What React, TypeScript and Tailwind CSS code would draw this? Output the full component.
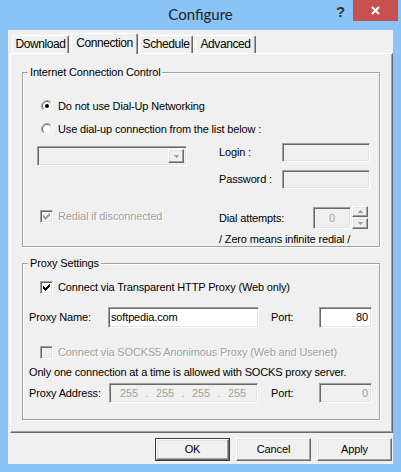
import type { ReactNode } from 'react'

const sunken =
  'border border-t-[#a0a0a0] border-l-[#a0a0a0] border-r-white border-b-white shadow-[inset_1px_1px_0_#696969,inset_-1px_-1px_0_#e3e3e3]'
const raised =
  'border border-t-white border-l-white border-r-[#696969] border-b-[#696969] shadow-[inset_-1px_-1px_0_#a0a0a0,inset_1px_1px_0_#e3e3e3]'
const grayText = 'text-[#a0a0a0] [text-shadow:1px_1px_0_#fff]'

function Radio({ checked }: { checked?: boolean }) {
  return (
    <svg width="12" height="12" viewBox="0 0 12 12" className="shrink-0">
      <circle cx="6" cy="6" r="5" fill="#fff" />
      <path d="M2.11 9.89 A5.5 5.5 0 0 1 9.89 2.11" fill="none" stroke="#a0a0a0" />
      <path d="M9.89 2.11 A5.5 5.5 0 0 1 2.11 9.89" fill="none" stroke="#fff" />
      <path d="M2.8 9.2 A4.5 4.5 0 0 1 9.2 2.8" fill="none" stroke="#696969" />
      <path d="M9.2 2.8 A4.5 4.5 0 0 1 2.8 9.2" fill="none" stroke="#e3e3e3" />
      {checked && <circle cx="6" cy="6" r="2" fill="#000" />}
    </svg>
  )
}

function Check({ checked, disabled }: { checked?: boolean; disabled?: boolean }) {
  const fill = disabled ? '#a0a0a0' : '#000'
  const tops = [2, 3, 4, 3, 2, 1, 0]
  return (
    <span
      className={`${sunken} w-[13px] h-[13px] shrink-0 flex items-center justify-center ${
        disabled ? 'bg-[#f0f0f0]' : 'bg-white'
      }`}
    >
      {checked && (
        <svg width="7" height="7" viewBox="0 0 7 7" shapeRendering="crispEdges">
          {tops.map((y, x) => (
            <rect key={x} x={x} y={y} width="1" height="3" fill={fill} />
          ))}
        </svg>
      )}
    </span>
  )
}

function Arrow({ up }: { up?: boolean }) {
  return (
    <svg width="5" height="3" viewBox="0 0 5 3" shapeRendering="crispEdges">
      <path d={up ? 'M2 0h1v1h1v1h1v1H0V2h1V1h1z' : 'M0 0h5v1H4v1H3v1H2V2H1V1H0z'} fill="#a0a0a0" />
    </svg>
  )
}

function Group({ title, children, className }: { title: string; children: ReactNode; className: string }) {
  return (
    <fieldset
      className={`${className} ml-[11px] w-[358px] border border-[#a0a0a0] shadow-[1px_1px_0_#fff,inset_1px_1px_0_#fff]`}
    >
      <legend className="ml-[5px] px-[2px] leading-[14px] bg-[#f0f0f0]">{title}</legend>
      {children}
    </fieldset>
  )
}

function Tab({ label, width, ml, active }: { label: string; width: string; ml: string; active?: boolean }) {
  return (
    <div
      className={`${width} ${ml} flex items-center justify-center rounded-t-[2px] border-t border-l border-r border-t-white border-l-white border-r-[#696969] shadow-[inset_-1px_0_0_#a0a0a0] text-[12px] tracking-[-0.4px] ${
        active ? 'h-[21px] -mb-[1px] relative z-10 bg-[#f0f0f0] pb-[2px]' : 'h-[18px]'
      }`}
    >
      {label}
    </div>
  )
}

function Button({ label, isDefault }: { label: string; isDefault?: boolean }) {
  return (
    <div className={`w-[75px] h-[23px] ${isDefault ? 'border border-[#3c3c3c]' : ''}`}>
      <div className={`${raised} h-full flex items-center justify-center`}>{label}</div>
    </div>
  )
}

function IpField() {
  const seg = 'w-[18px] text-center'
  const dot = 'w-[18px] text-center'
  return (
    <div className={`${sunken} w-[149px] h-[20px] bg-[#f0f0f0] flex items-center pl-[10px] text-[#a0a0a0]`}>
      <span className={seg}>255</span>
      <span className={dot}>.</span>
      <span className={seg}>255</span>
      <span className={dot}>.</span>
      <span className={seg}>255</span>
      <span className={dot}>.</span>
      <span className={seg}>255</span>
    </div>
  )
}

export default function App() {
  return (
    <div className="w-[401px] h-[472px] bg-[#8ac4f6] flex flex-col overflow-hidden font-['Liberation_Sans',Arial,sans-serif] text-[11px] leading-[13px] tracking-[-0.15px] text-black">
      {/* title bar */}
      <div className="h-[30px] flex shrink-0">
        <div className="flex-1" />
        <div className="pt-[5px] leading-[18px] text-[15px] tracking-normal text-[#1e1e1e] font-['Lato',sans-serif]">
          Configure
        </div>
        <div className="flex-1 flex justify-end items-start">
          <span className="mt-[4px] text-[15px] leading-[15px] font-bold text-[#333]">?</span>
          <div className="ml-[8px] mr-[3px] w-[45px] h-[21px] bg-[#c75050] flex items-center justify-center">
            <svg width="9" height="9" viewBox="0 0 9 9">
              <path d="M1 1L8 8M8 1L1 8" stroke="#fff" strokeWidth="2" />
            </svg>
          </div>
        </div>
      </div>

      {/* client area */}
      <div className="mx-[8px] mb-[8px] flex-1 bg-[#f0f0f0] flex flex-col">
        <div className="h-[23px] flex items-end shrink-0">
          <Tab label="Download" width="w-[57px]" ml="ml-[4px]" />
          <Tab label="Connection" width="w-[67px]" ml="ml-[2px]" active />
          <Tab label="Schedule" width="w-[54px]" ml="ml-[1px]" />
          <Tab label="Advanced" width="w-[61px]" ml="ml-[2px]" />
        </div>

        <div className="ml-[2px] w-[383px] h-[380px] shrink-0 border border-t-white border-l-white border-r-[#696969] border-b-[#696969] shadow-[inset_-1px_-1px_0_#a0a0a0]">
          <Group title="Internet Connection Control" className="mt-[11px]">
            <div className="mt-[19px] ml-[18px] h-[16px] flex items-center">
              <Radio checked />
              <span className="ml-[5px]">Do not use Dial-Up Networking</span>
            </div>
            <div className="mt-[7px] ml-[18px] h-[16px] flex items-center">
              <Radio />
              <span className="ml-[5px]">Use dial-up connection from the list below :</span>
            </div>
            <div className="mt-[6px] flex">
              <div className="ml-[14px] w-[150px]">
                <div className={`${sunken} mt-[3px] h-[20px] bg-[#f0f0f0] flex justify-end p-[2px]`}>
                  <div className={`${raised} w-[16px] h-full flex items-center justify-center`}>
                    <Arrow />
                  </div>
                </div>
                <div className="mt-[43px] ml-[3px] h-[14px] flex items-center">
                  <Check checked disabled />
                  <span className={`ml-[5px] ${grayText}`}>Redial if disconnected</span>
                </div>
              </div>
              <div className="ml-[32px]">
                <div className="h-[19px] flex items-center">
                  <span className="w-[63px]">Login :</span>
                  <div className={`${sunken} w-[88px] h-[19px] bg-[#f0f0f0]`} />
                </div>
                <div className="mt-[8px] h-[19px] flex items-center">
                  <span className="w-[63px]">Password :</span>
                  <div className={`${sunken} w-[88px] h-[19px] bg-[#f0f0f0]`} />
                </div>
                <div className="mt-[18px] h-[22px] flex items-center">
                  <span className="w-[94px]">Dial attempts:</span>
                  <div className={`${sunken} w-[38px] h-[22px] bg-[#f0f0f0] flex items-center justify-center text-[#a0a0a0]`}>
                    0
                  </div>
                  <div className="ml-[1px] w-[16px] h-[23px] -mt-[1px] flex flex-col gap-[1px]">
                    <div className={`${raised} h-[11px] flex items-center justify-center`}>
                      <Arrow up />
                    </div>
                    <div className={`${raised} h-[11px] flex items-center justify-center`}>
                      <Arrow />
                    </div>
                  </div>
                </div>
                <div className="mt-[4px] h-[13px]">/ Zero means infinite redial /</div>
              </div>
            </div>
          </Group>

          <Group title="Proxy Settings" className="mt-[9px]">
            <div className="mt-[9px] ml-[17px] h-[16px] flex items-center">
              <Check checked />
              <span className="ml-[5px]">Connect via Transparent HTTP Proxy (Web only)</span>
            </div>
            <div className="mt-[12px] pl-[6px] h-[21px] flex items-center">
              <span className="w-[79px]">Proxy Name:</span>
              <div className={`${sunken} w-[151px] h-[21px] bg-white flex items-center pl-[2px]`}>softpedia.com</div>
              <span className="ml-[12px] w-[48px]">Port:</span>
              <div className={`${sunken} w-[53px] h-[21px] bg-white flex items-center justify-end pr-[3px]`}>80</div>
            </div>
            <div className="mt-[16px] ml-[17px] h-[16px] flex items-center">
              <Check disabled />
              <span className={`ml-[5px] ${grayText}`}>Connect via SOCKS5 Anonimous Proxy (Web and Usenet)</span>
            </div>
            <div className="mt-[6px] pl-[6px] h-[13px]">
              Only one connection at a time is allowed with SOCKS proxy server.
            </div>
            <div className="mt-[4px] mb-[16px] pl-[6px] h-[20px] flex items-center">
              <span className="w-[80px]">Proxy Address:</span>
              <IpField />
              <span className="ml-[13px] w-[48px]">Port:</span>
              <div className={`${sunken} w-[53px] h-[20px] bg-[#f0f0f0] flex items-center justify-end pr-[3px] text-[#a0a0a0]`}>
                0
              </div>
            </div>
          </Group>
        </div>

        <div className="mt-[5px] pr-[1px] flex justify-end gap-[6px]">
          <Button label="OK" isDefault />
          <Button label="Cancel" />
          <Button label="Apply" />
        </div>
      </div>
    </div>
  )
}
